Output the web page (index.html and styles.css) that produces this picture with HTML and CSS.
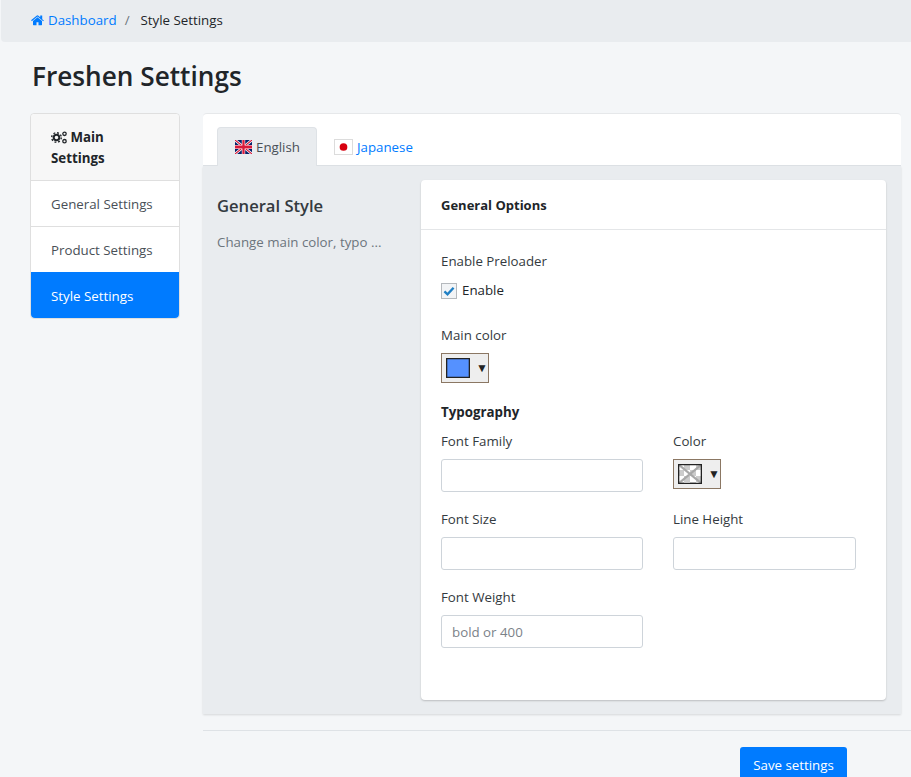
FILE: index.html
```html
<!DOCTYPE html>
<html lang="en">
<head>
    <meta charset="UTF-8">
    <meta name="viewport" content="width=device-width, initial-scale=1.0">
    <title>Freshen Settings</title>
    <link rel="stylesheet" href="styles.css">
</head>
<body>
    <nav class="breadcrumb">
        <a href="#" class="crumb-link">
            <svg class="home-icon" viewBox="0 0 1664 1408"><path fill="currentColor" d="M1408 768v480q0 26-19 45t-45 19H960V928H704v384H320q-26 0-45-19t-19-45V768q0-1 .5-3t.5-3l575-474 575 474q1 2 1 6zm223-69l-62 74q-8 9-21 11h-3q-13 0-21-7L832 200 140 777q-12 8-24 7-13-2-21-11l-62-74q-8-10-7-23.500t11-21.500L756 70q32-26 76-26t76 26l272 227V80q0-14 9-23t23-9h192q14 0 23 9t9 23v454l219 182q10 8 11 21.500t-7 23.500z"/></svg>
            Dashboard
        </a>
        <span class="crumb-sep">/</span>
        <span>Style Settings</span>
    </nav>

    <h1 class="page-title">Freshen Settings</h1>

    <div class="layout">
        <aside class="side-menu">
            <div class="side-head">
                <svg class="cogs-icon" viewBox="0 0 16 13">
                    <circle cx="5.500" cy="6.500" r="2.800" fill="none" stroke="currentColor" stroke-width="2"/>
                    <circle cx="5.500" cy="6.500" r="4.800" fill="none" stroke="currentColor" stroke-width="1.400" stroke-dasharray="1.900 1.870"/>
                    <circle cx="13.500" cy="2.800" r="1.700" fill="none" stroke="currentColor" stroke-width="1.300"/>
                    <circle cx="13.500" cy="10.200" r="1.700" fill="none" stroke="currentColor" stroke-width="1.300"/>
                </svg>
                Main Settings
            </div>
            <a href="#" class="side-item">General Settings</a>
            <a href="#" class="side-item">Product Settings</a>
            <a href="#" class="side-item active">Style Settings</a>
        </aside>

        <main class="content">
            <div class="tab-bar">
                <a href="#" class="tab active">
                    <svg class="flag" viewBox="0 0 60 40" preserveAspectRatio="none">
                        <rect width="60" height="40" fill="#012169"/>
                        <path d="M0 0L60 40M60 0L0 40" stroke="#fff" stroke-width="8"/>
                        <path d="M0 0L60 40M60 0L0 40" stroke="#d8193a" stroke-width="3.500"/>
                        <path d="M30 0V40M0 20H60" stroke="#fff" stroke-width="12"/>
                        <path d="M30 0V40M0 20H60" stroke="#d8193a" stroke-width="8"/>
                    </svg>
                    English
                </a>
                <a href="#" class="tab">
                    <svg class="flag flag-jp" viewBox="0 0 19 16">
                        <rect width="19" height="16" fill="#fff"/>
                        <circle cx="9.500" cy="8" r="4.400" fill="#d7000f"/>
                    </svg>
                    <span class="tab-text">Japanese</span>
                </a>
            </div>

            <div class="tab-panel">
                <div class="section-info">
                    <h2>General Style</h2>
                    <p>Change main color, typo ...</p>
                </div>

                <div class="card">
                    <div class="card-head">General Options</div>
                    <div class="card-body">
                        <div class="label">Enable Preloader</div>
                        <label class="check">
                            <span class="check-box">
                                <svg viewBox="0 0 14 12"><path d="M1.500 6.500L5.200 10 12.500 2" fill="none" stroke="#1f7fc4" stroke-width="2.800"/></svg>
                            </span>
                            Enable
                        </label>

                        <div class="label main-color">Main color</div>
                        <div class="picker">
                            <span class="swatch swatch-blue"></span>
                            <span class="arrow">▼</span>
                        </div>

                        <h3 class="sub-title">Typography</h3>
                        <div class="field-grid">
                            <div class="field">
                                <div class="label">Font Family</div>
                                <input type="text" class="input">
                            </div>
                            <div class="field">
                                <div class="label">Color</div>
                                <div class="picker">
                                    <span class="swatch swatch-empty">
                                        <svg viewBox="0 0 24 18" preserveAspectRatio="none"><path d="M0 0L24 18M24 0L0 18" stroke="#a8a8a8" stroke-width="2"/></svg>
                                    </span>
                                    <span class="arrow">▼</span>
                                </div>
                            </div>
                            <div class="field">
                                <div class="label">Font Size</div>
                                <input type="text" class="input">
                            </div>
                            <div class="field">
                                <div class="label">Line Height</div>
                                <input type="text" class="input">
                            </div>
                            <div class="field">
                                <div class="label">Font Weight</div>
                                <input type="text" class="input" placeholder="bold or 400">
                            </div>
                        </div>
                    </div>
                </div>
            </div>

            <div class="form-foot">
                <button class="save-button">Save settings</button>
            </div>
        </main>
    </div>
</body>
</html>
```

FILE: styles.css
```css
html, body {
    height: 777px;
    overflow: hidden;
}
body {
    font-family: "Open Sans", "Noto Sans", Arial, sans-serif;
    font-size: 13.300px;
    line-height: 21px;
    margin: 0;
    background-color: #f4f6f8;
    color: #212529;
}
a {
    text-decoration: none;
    color: #007bff;
}

/* breadcrumb */
.breadcrumb {
    display: flex;
    align-items: center;
    height: 42px;
    padding: 0 0 2px 30px;
    box-sizing: border-box;
    margin-left: 1px;
    background-color: #e9ecef;
    border-bottom-left-radius: 4px;
}
.crumb-link {
    display: flex;
    align-items: center;
    gap: 4px;
}
.home-icon {
    width: 13px;
    height: 11px;
}
.crumb-sep {
    color: #6c757d;
    padding: 0 11px 0 8px;
}
.page-title {
    font-size: 26.200px;
    line-height: 32px;
    font-weight: 600;
    margin: 18px 0 21px 32px;
}

/* two columns */
.layout {
    display: flex;
    align-items: flex-start;
    gap: 23px;
    padding: 0 10px 0 30px;
}
.side-menu {
    width: 150px;
    flex-shrink: 0;
    box-sizing: border-box;
    background-color: #fff;
    border: 1px solid #dfdfdf;
    border-radius: 4px;
}
.side-head {
    padding: 13px 20px 11px;
    background-color: #f7f7f7;
    border-bottom: 1px solid #dfdfdf;
    border-radius: 4px 4px 0 0;
    font-weight: 700;
}
.cogs-icon {
    width: 16px;
    height: 13px;
    vertical-align: -2px;
}
.side-item {
    display: block;
    padding: 13px 20px 11px;
    height: 21px;
    color: #495057;
    border-bottom: 1px solid #dfdfdf;
}
.side-item.active {
    margin-top: -1px;
    padding: 14px 20px 11px;
    background-color: #007bff;
    color: #fff;
    border-bottom: none;
    border-radius: 0 0 4px 4px;
}

/* tabs */
.content {
    flex: 1;
}
.tab-bar {
    display: flex;
    height: 53px;
    box-sizing: border-box;
    align-items: flex-end;
    padding-left: 14px;
    background-color: #fff;
    border-top: 1px solid #e6e8ea;
    border-bottom: 1px solid #dee2e6;
    border-radius: 4px 4px 0 0;
}
.tab {
    display: flex;
    align-items: center;
    gap: 4px;
    height: 39px;
    box-sizing: border-box;
    padding: 0 16px 0 17px;
    margin-bottom: -1px;
    border-radius: 4px 4px 0 0;
}
.tab.active {
    background-color: #e9ecef;
    color: #495057;
    border: 1px solid #dee2e6;
    border-bottom: none;
}
.tab-text {
    padding-top: 2px;
}
.flag {
    width: 17px;
    height: 14px;
}
.flag-jp {
    width: 19px;
    height: 16px;
    border: 1px solid #dcdcdc;
    box-sizing: border-box;
}

/* panel */
.tab-panel {
    display: flex;
    align-items: flex-start;
    height: 548px;
    box-sizing: border-box;
    padding: 14px 15px 14px 14px;
    background-color: #e9ecef;
    box-shadow: 0 1px 2px rgba(0, 0, 0, 0.12);
}
.section-info {
    width: 204px;
    flex-shrink: 0;
    color: #6c757d;
}
.section-info h2 {
    font-size: 16.600px;
    line-height: 24px;
    font-weight: 600;
    color: #343a40;
    margin: 14px 0 14px;
}
.section-info p {
    margin: 0;
}
.card {
    flex: 1;
    height: 520px;
    background-color: #fff;
    border-radius: 4px;
    box-shadow: 0 1px 2px rgba(0, 0, 0, 0.2);
}
.card-head {
    height: 49px;
    line-height: 50px;
    padding-left: 20px;
    font-size: 13px;
    font-weight: 700;
    border-bottom: 1px solid #e4e6e8;
}
.card-body {
    padding: 21px 21px 0 20px;
}
.label {
    color: #343a40;
}
.check {
    display: flex;
    align-items: center;
    gap: 5px;
    margin-top: 8px;
}
.check-box {
    display: flex;
    align-items: center;
    justify-content: center;
    width: 16px;
    height: 16px;
    box-sizing: border-box;
    border: 1px solid #b5b9bd;
    background-color: #f2f4f6;
}
.check-box svg {
    width: 12px;
    height: 10px;
}
.main-color {
    margin-top: 24px;
}

/* colour picker */
.picker {
    display: flex;
    align-items: center;
    gap: 6px;
    width: 48px;
    height: 30px;
    margin-top: 7px;
    padding-left: 4px;
    box-sizing: border-box;
    background-color: #eee;
    border: 1px solid #8b7763;
}
.swatch {
    display: block;
    width: 25px;
    height: 20px;
    box-sizing: border-box;
    position: relative;
}
.swatch::after {
    content: "";
    position: absolute;
    inset: 0;
    box-shadow: inset 0 0 0 1.300px #222;
}
.swatch-blue {
    background-color: #5591ff;
}
.swatch-empty {
    background-color: #fff;
    background-image: conic-gradient(#ccc 25%, #fff 0 50%, #ccc 0 75%, #fff 0);
    background-size: 12px 12px;
}
.swatch-empty svg {
    display: block;
    width: 100%;
    height: 100%;
}
.arrow {
    font-size: 12px;
    line-height: 1;
    color: #222;
}
.sub-title {
    font-size: 13.300px;
    line-height: 21px;
    font-weight: 700;
    margin: 19px 0 8px;
}

/* typography fields */
.field-grid {
    display: grid;
    grid-template-columns: 202px 183px;
    column-gap: 30px;
    row-gap: 17px;
}
.input {
    display: block;
    width: 100%;
    height: 33px;
    box-sizing: border-box;
    margin-top: 7px;
    padding: 0 10px;
    font: inherit;
    background-color: #fff;
    border: 1px solid #ced4da;
    border-radius: 3px;
}
.input::placeholder {
    color: #7b8289;
}

/* footer */
.form-foot {
    display: flex;
    justify-content: flex-end;
    margin: 16px -10px 0 0;
    padding: 16px 64px 0 0;
    border-top: 1px solid #dee2e6;
}
.save-button {
    width: 107px;
    height: 38px;
    padding: 0 0 2px;
    font: inherit;
    color: #fff;
    background-color: #007bff;
    border: none;
    border-radius: 3px;
}
```
